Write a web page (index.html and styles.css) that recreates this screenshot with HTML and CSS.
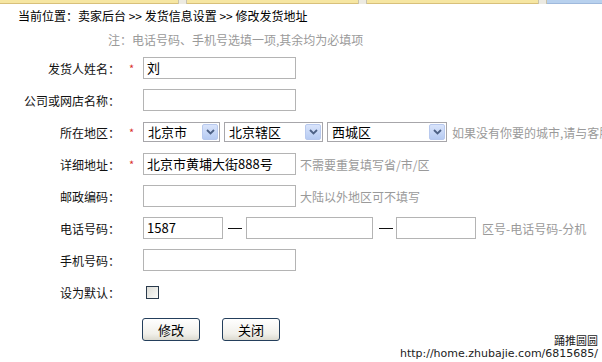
FILE: index.html
```html
<!DOCTYPE html>
<html>
<head>
<meta charset="utf-8">
<link rel="stylesheet" href="styles.css">
</head>
<body>
<div class="topbar">
  <div class="seg s1"></div><div class="sep"></div>
  <div class="seg s2"></div><div class="sep"></div>
  <div class="seg s3"></div><div class="sep"></div>
  <div class="seg blue"></div>
</div>
<div class="crumb">当前位置：卖家后台 &gt;&gt; 发货信息设置 &gt;&gt; 修改发货地址</div>
<div class="note">注：电话号码、手机号选填一项,其余均为必填项</div>

<div class="form">
  <div class="row">
    <div class="label">发货人姓名：</div><div class="star">*</div>
    <div class="input w153">刘</div>
  </div>
  <div class="row">
    <div class="label">公司或网店名称：</div><div class="star"></div>
    <div class="input w153"></div>
  </div>
  <div class="row">
    <div class="label">所在地区：</div><div class="star">*</div>
    <div class="select sw1"><span class="stext">北京市</span><span class="arrow"><svg width="9" height="6" viewBox="0 0 9 6"><path d="M1 1 L4.5 4.5 L8 1" fill="none" stroke="#4d6185" stroke-width="1.8"/></svg></span></div>
    <div class="select sw2"><span class="stext">北京辖区</span><span class="arrow"><svg width="9" height="6" viewBox="0 0 9 6"><path d="M1 1 L4.5 4.5 L8 1" fill="none" stroke="#4d6185" stroke-width="1.8"/></svg></span></div>
    <div class="select sw3"><span class="stext">西城区</span><span class="arrow"><svg width="9" height="6" viewBox="0 0 9 6"><path d="M1 1 L4.5 4.5 L8 1" fill="none" stroke="#4d6185" stroke-width="1.8"/></svg></span></div>
    <div class="hint nowrap">如果没有你要的城市,请与客服联系</div>
  </div>
  <div class="row">
    <div class="label">详细地址：</div><div class="star">*</div>
    <div class="input w153">北京市黄埔大街888号</div>
    <div class="hint">不需要重复填写省/市/区</div>
  </div>
  <div class="row">
    <div class="label">邮政编码：</div><div class="star"></div>
    <div class="input w153"></div>
    <div class="hint">大陆以外地区可不填写</div>
  </div>
  <div class="row">
    <div class="label">电话号码：</div><div class="star"></div>
    <div class="input w80">1587</div>
    <div class="dash"></div>
    <div class="input w127"></div>
    <div class="dash d2"></div>
    <div class="input w80"></div>
    <div class="hint h2">区号-电话号码-分机</div>
  </div>
  <div class="row">
    <div class="label">手机号码：</div><div class="star"></div>
    <div class="input w153"></div>
  </div>
  <div class="row">
    <div class="label">设为默认：</div><div class="star"></div>
    <div class="check"></div>
  </div>
  <div class="buttons">
    <div class="btn">修改</div>
    <div class="btn">关闭</div>
  </div>
</div>

<div class="mark">
  <div>踊推圆圆</div>
  <div>http://home.zhubajie.com/6815685/</div>
</div>
</body>
</html>
```

FILE: styles.css
```css
html, body {
  margin: 0;
  padding: 0;
  background: #fff;
  width: 602px;
  height: 362px;
  overflow: hidden;
  font-family: "Noto Sans CJK SC", "Liberation Sans", sans-serif;
  font-size: 12px;
  color: #111;
}
body { position: relative; }

.topbar {
  display: flex;
  height: 4px;
}
.seg {
  background: #f6e6a2;
  border-bottom: 1px solid #d8c07a;
  box-sizing: border-box;
}
.s1 { width: 178px; }
.s2 { width: 171px; }
.s3 { width: 171px; }
.sep {
  width: 9px;
  background: #eceae2;
  border-left: 1px solid #c9c3ad;
  border-right: 1px solid #c9c3ad;
  box-sizing: border-box;
}
.blue { flex: 1; background: #b8d1ee; border-bottom: 1px solid #9fb9dc; }

.crumb {
  height: 24px;
  line-height: 24px;
  padding-left: 18px;
  color: #000;
}
.note {
  height: 24px;
  line-height: 24px;
  padding-left: 108px;
  color: #9a9a9a;
}

.form { display: flex; flex-direction: column; }
.row {
  height: 32px;
  display: flex;
  align-items: center;
  overflow: hidden;
}
.row > * { flex-shrink: 0; }
.label {
  width: 120px;
  text-align: right;
  color: #111;
}
.star {
  width: 23px;
  box-sizing: border-box;
  padding-left: 9px;
  color: #d9302c;
  font-size: 11px;
  line-height: 12px;
  height: 12px;
}
.input {
  height: 22px;
  box-sizing: border-box;
  border: 1px solid #b4b4b4;
  padding-left: 3px;
  font-size: 13px;
  line-height: 20px;
  color: #000;
  white-space: nowrap;
  overflow: hidden;
}
.w153 { width: 153px; }
.w80 { width: 80px; }
.w127 { width: 127px; }

.select {
  height: 20px;
  box-sizing: border-box;
  border: 1px solid #a7a6aa;
  display: flex;
  align-items: center;
  justify-content: space-between;
  margin-right: 4px;
  padding: 1px;
}
.sw1 { width: 77px; }
.sw2 { width: 99px; }
.sw3 { width: 120px; }
.stext {
  font-size: 13px;
  line-height: 16px;
  padding-left: 3px;
  color: #000;
}
.arrow {
  width: 16px;
  height: 16px;
  box-sizing: border-box;
  border: 1px solid #b8c9ee;
  border-radius: 2px;
  background: linear-gradient(#d9e4fb, #b6cbf2);
  display: flex;
  align-items: center;
  justify-content: center;
}
.hint {
  color: #9a9a9a;
  margin-left: 4px;
}
.row > .nowrap {
  white-space: nowrap;
  margin-left: 1px;
  flex-shrink: 1;
  min-width: 0;
  overflow: hidden;
}
.h2 { margin-left: 6px; }

.dash {
  width: 14px;
  height: 1px;
  background: #111;
  margin: 0 4px 0 5px;
}
.d2 { margin: 0 3px 0 6px; }

.check {
  width: 13px;
  height: 13px;
  box-sizing: border-box;
  border: 1px solid #2a3a4c;
  background: linear-gradient(135deg, #dcdcd6, #fbfbf9);
  margin-left: 3px;
  margin-top: 1px;
}

.buttons {
  display: flex;
  gap: 22px;
  padding-left: 142px;
  margin-top: 10px;
}
.btn {
  width: 58px;
  height: 23px;
  box-sizing: border-box;
  border: 1px solid #243f5c;
  border-radius: 3px;
  background: linear-gradient(#ffffff, #f1f0ea 70%, #dcdad0);
  text-align: center;
  line-height: 21px;
  font-size: 13px;
  color: #000;
}

.mark {
  position: absolute;
  right: 4px;
  bottom: 2px;
  text-align: right;
  font-size: 11px;
  line-height: 13px;
  color: #222;
  font-family: "DejaVu Sans", "Noto Sans CJK SC", sans-serif;
}
.mark div:first-child { font-family: "Noto Sans CJK SC", sans-serif; }
```
